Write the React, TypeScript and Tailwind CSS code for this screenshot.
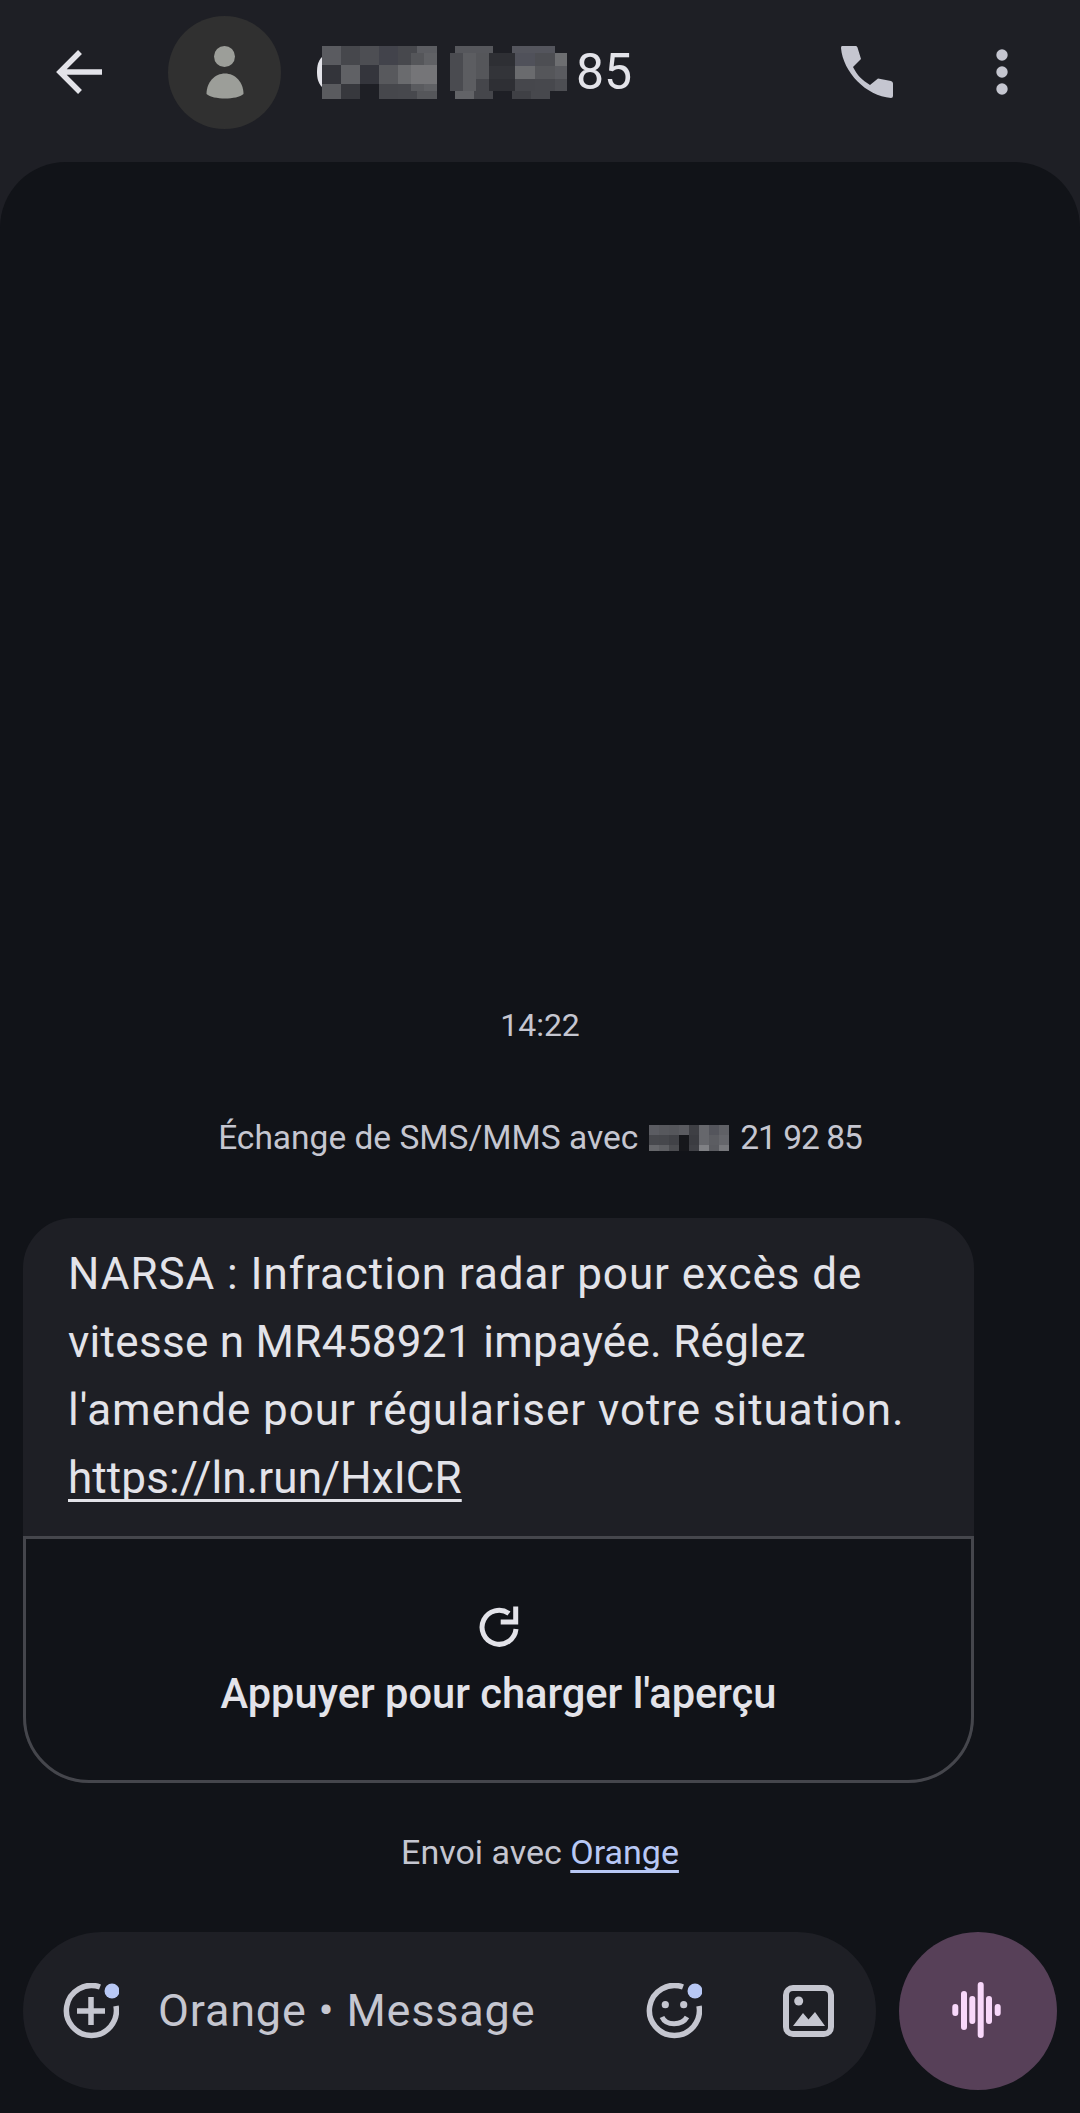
type Cell = [number, string];
type Row = { h: number; cells: Cell[] };
const T = "transparent";
const nameA: Row[] = [
  { h: 7, cells: [[19, "#5a5b60"], [19, "#46474c"], [19, "#4d4e53"], [19, "#42434b"], [19, "#47484d"], [20, "#5c5d62"]] },
  { h: 12, cells: [[19, "#5a5b60"], [19, "#46474c"], [19, "#4d4e53"], [19, "#42434b"], [13, "#47484d"], [13, "#55565a"], [13, "#606165"]] },
  { h: 19, cells: [[19, "#33343a"], [19, "#606165"], [19, "#34353c"], [19, "#58595d"], [13, "#6a6b6e"], [26, "#757578"]] },
  { h: 7, cells: [[19, "#5a5b5f"], [19, "#37383d"], [19, "#1e1f25"], [19, "#46474c"], [13, "#47484d"], [13, "#5a5b5f"], [13, "#606165"]] },
  { h: 8, cells: [[19, "#5a5b5f"], [19, "#37383d"], [19, "#1e1f25"], [19, "#46474c"], [19, "#47484d"], [20, "#55565a"]] },
];
const nameB: Row[] = [
  { h: 7, cells: [[5, T], [38, "#56575c"], [19, T], [43, "#54555d"], [12, T]] },
  { h: 13, cells: [[13, "#4a4b50"], [13, "#5c5d61"], [13, "#55565a"], [26, "#2e2f34"], [20, "#50515a"], [20, "#4d4e53"], [12, "#6d6e71"]] },
  { h: 13, cells: [[13, "#4a4b50"], [13, "#5c5d61"], [13, "#55565a"], [26, "#333439"], [20, "#6a6b6e"], [20, "#55565a"], [12, "#5a5b60"]] },
  { h: 12, cells: [[13, "#4a4b50"], [13, "#5c5d61"], [13, "#45464b"], [26, "#2e2f34"], [20, "#46474c"], [20, "#47484d"], [12, "#4d4e53"]] },
  { h: 8, cells: [[5, T], [19, "#626367"], [19, "#45464b"], [19, T], [19, "#3f4045"], [19, "#47484d"], [17, T]] },
];
const small: Row[] = [
  { h: 10, cells: [[10, "#5b5c62"], [10, "#57585d"], [10, "#55565b"], [10, "#5a5b60"], [10, "#3e3f44"], [10, "#66676c"], [10, "#54555c"], [10, "#606166"]] },
  { h: 10, cells: [[10, "#47484d"], [10, "#46474c"], [10, "#414247"], [10, "#16171b"], [10, "#3b3c41"], [10, "#66676c"], [10, "#5c5d62"], [10, "#65666b"]] },
  { h: 6, cells: [[10, "#66676b"], [10, "#5e5f63"], [10, "#4b4c50"], [10, "#16171b"], [10, "#3f4045"], [10, "#808185"], [10, "#5a5b60"], [10, "#77787c"]] },
];
function Mosaic({ rows }: { rows: Row[] }) {
  return (
    <div className="flex flex-col shrink-0">
      {rows.map((r, i) => (
        <div key={i} className="flex">
          {r.cells.map(([w, c], j) => (
            <div key={j} style={{ width: w, height: r.h, background: c }} />
          ))}
        </div>
      ))}
    </div>
  );
}
export default function App() {
  return (
    <div className="w-[1080px] h-[2113px] bg-[#1e1f25] flex flex-col overflow-hidden font-['Roboto',sans-serif]">
      <header className="h-[162px] shrink-0 pb-[18px] flex items-center">
        <svg className="ml-[50px] w-[58px] h-[58px]" viewBox="0 0 58 58" fill="none" stroke="#e3e3e9" strokeWidth="5.500"><path d="M30 9 10 29l20 20M11 29h41" /></svg>
        <div className="ml-[60px] w-[113px] h-[113px] rounded-full bg-[#303030] flex items-center justify-center">
          <svg className="w-[64px] h-[64px]" viewBox="0 0 64 64" fill="#9c9e99"><circle cx="31.500" cy="16.500" r="10.500" /><path d="M13.500 54C13.500 42 22 33.500 32 33.500S50.500 42 50.500 54C44 60 20 60 13.500 54z" /></svg>
        </div>
        <svg className="ml-[36px] w-[5px] h-[30px]" viewBox="0 0 5 30" fill="#e3e3e9"><path d="M5 0C1 4 0 9 0 15s1 11 5 15z" /></svg>
        <Mosaic rows={nameA} />
        <div className="ml-[13px]"><Mosaic rows={nameB} /></div>
        <span className="ml-[9px] text-[50px] leading-none text-[#e3e3e9]">85</span>
        <div className="flex-1" />
        <svg className="w-[52px] h-[52px]" viewBox="0 0 52 52" fill="#c5c6d0"><path d="M1 0H15Q16 0 16.500 1.500L20 13 12 21C16 29 21 34 29 39L37 32.500 50 35Q52 35.500 52 37.500V50Q52 52 50 52C25 50 2 26 0 2Q0 0 1 0z" /></svg>
        <svg className="ml-[103px] mr-[72px] w-[12px] h-[46px]" viewBox="0 0 12 46" fill="#c5c6d0"><circle cx="6" cy="6" r="5.700" /><circle cx="6" cy="23" r="5.700" /><circle cx="6" cy="40" r="5.700" /></svg>
      </header>
      <main className="flex-1 bg-[#111318] rounded-t-[66px] flex flex-col">
        <div className="flex-1" />
        <p className="text-center text-[32px] leading-[40px] text-[#c5c6d0]">14:22</p>
        <div className="mt-[71px] flex items-center justify-center text-[33.500px] leading-[44px] text-[#c5c6d0]">
          <span>Échange de SMS/MMS avec</span>
          <div className="mx-[11px]"><Mosaic rows={small} /></div>
          <span className="tracking-[-1px]">21 92 85</span>
        </div>
        <article className="mt-[58px] ml-[23px] w-[951px] rounded-t-[50px] rounded-b-[66px] bg-[#1e1f25]">
          <div className="pl-[45px] pt-[22px] pb-[24px] text-[44px] leading-[68px] text-[#e3e3e9]">
            <p className="tracking-[0.95px]">NARSA : Infraction radar pour excès de</p>
            <p className="tracking-[0.3px]">vitesse n MR458921 impayée. Réglez</p>
            <p className="tracking-[0.95px]">l'amende pour régulariser votre situation.</p>
            <p className="underline decoration-[3px] underline-offset-[6px] [text-decoration-skip-ink:none] tracking-[0.1px]">https://ln.run/HxICR</p>
          </div>
          <div className="h-[247px] border-[3px] border-[#45464c] rounded-b-[66px] bg-[#111318] flex flex-col items-center pt-[65px]">
            <svg className="w-[44px] h-[44px]" viewBox="0 0 44 44" fill="none" stroke="#e3e3e9" strokeWidth="5"><path d="M32 9.500A17 17 0 1 0 39 25" /><path d="M38.700 2.500V18H23.700" /></svg>
            <p className="mt-[22px] text-[41.600px] leading-[48px] font-medium text-[#e3e3e9]">Appuyer pour charger l'aperçu</p>
          </div>
        </article>
        <p className="mt-[47px] text-center text-[34px] leading-[44px] text-[#c5c6d0]">
          Envoi avec <span className="text-[#b8c8f5] underline decoration-[3px] underline-offset-[6px] [text-decoration-skip-ink:none]">Orange</span>
        </p>
        <footer className="mt-[58px] mb-[23px] mx-[23px] flex gap-[23px]">
          <div className="flex-1 h-[158px] rounded-full bg-[#1e1f25] flex items-center">
            <svg className="ml-[40px] w-[56px] h-[56px]" viewBox="0 0 56 56" fill="none" stroke="#c5c6d0" strokeWidth="5.500"><path d="M37 4A25 25 0 1 0 53 23" /><path d="M28 14v28M14 28h28" /><circle cx="49" cy="8" r="7.500" fill="#b8c8f5" stroke="none" /></svg>
            <span className="ml-[39px] text-[45px] tracking-[0.8px] text-[#c5c6d0]">Orange • Message</span>
            <div className="flex-1" />
            <svg className="w-[56px] h-[56px]" viewBox="0 0 56 56" fill="none" stroke="#c5c6d0" strokeWidth="5.500"><path d="M37 4A25 25 0 1 0 53 23" /><circle cx="19.300" cy="21.700" r="3.600" fill="#c5c6d0" stroke="none" /><circle cx="37.700" cy="21.700" r="3.600" fill="#c5c6d0" stroke="none" /><path d="M16 34c4 9 20 9 25 0" strokeWidth="5" /><circle cx="49" cy="8" r="7.500" fill="#b8c8f5" stroke="none" /></svg>
            <svg className="ml-[81px] mr-[42px] w-[51px] h-[52px]" viewBox="0 0 51 52" fill="none"><rect x="3" y="3" width="45" height="46" rx="7" stroke="#c5c6d0" strokeWidth="6" /><circle cx="15.700" cy="16" r="4.500" fill="#c5c6d0" /><path d="M10 41 20 28l5.500 6.500L32 27l10 14z" fill="#c5c6d0" /></svg>
          </div>
          <div className="w-[158px] h-[158px] rounded-full bg-[#574058] flex items-center justify-center">
            <svg className="w-[56px] h-[64px]" viewBox="0 0 56 64" stroke="#f8d8fa" strokeWidth="6" strokeLinecap="round"><path d="M5.300 28v6M14 15v33M22.300 20v22M30.700 6v50M39 20v22M47.700 28v6" /></svg>
          </div>
        </footer>
      </main>
    </div>
  );
}
